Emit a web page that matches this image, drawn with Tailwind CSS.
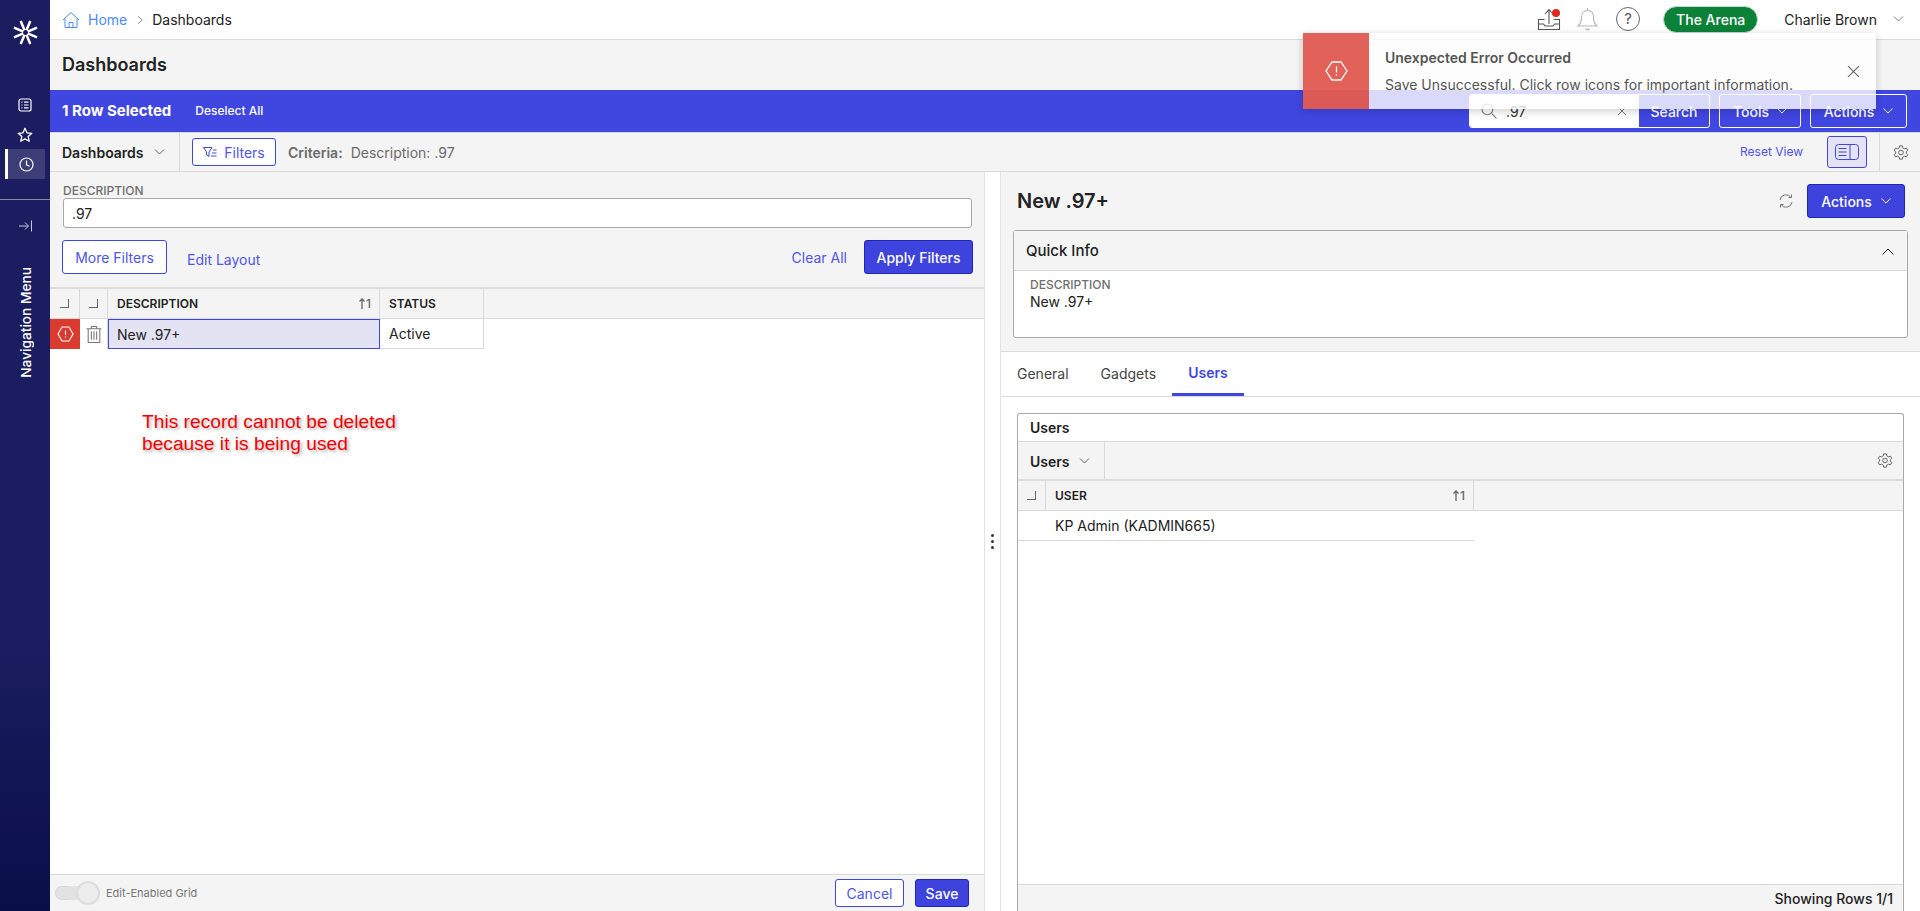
<!DOCTYPE html>
<html lang="en">
<head>
  <meta charset="UTF-8" />
  <title>Dashboards</title>
  <script src="https://cdn.jsdelivr.net/npm/@tailwindcss/browser@4"></script>
</head>
<body class="h-[911px] overflow-hidden bg-white font-['Inter',sans-serif] text-[14px] text-[#222]">
  <div class="relative flex h-[911px] w-[1920px]">

    <!-- Sidebar -->
    <aside class="flex w-[50px] shrink-0 flex-col items-center bg-gradient-to-b from-[#1b1d60] from-70% to-[#0a0e48] text-white">
      <svg class="mt-[20px] h-[25px] w-[25px]" viewBox="0 0 26 26" fill="none" stroke="white" stroke-width="2.600">
        <path d="M8 1l4 9.700M18 1l-4 9.700M1 8l9.700 4M25 8l-9.700 4M1 18l9.700-4M25 18l-9.700-4M8 25l4-9.700M18 25l-4-9.700"/>
      </svg>
      <svg class="mt-[53px] h-[14px] w-[14px]" viewBox="0 0 14 14" fill="none" stroke="white" stroke-width="1.200">
        <rect x="1" y="1" width="12" height="12" rx="2"/><path d="M3.500 4.200h1M3.500 7h1M3.500 9.800h1M6 4.200h4.500M6 7h4.500M6 9.800h4.500"/>
      </svg>
      <svg class="mt-[15px] h-[16px] w-[16px]" viewBox="0 0 16 16" fill="none" stroke="white" stroke-width="1.300" stroke-linejoin="round">
        <path d="M8 1.300l2 4.500 4.800.5-3.600 3.200 1 4.800L8 11.900l-4.200 2.400 1-4.800L1.200 6.300 6 5.800z"/>
      </svg>
      <div class="mt-[6px] flex h-[30px] w-[40px] items-center justify-center border-l-[3px] border-white bg-[#3d3e78]">
        <svg class="h-[15px] w-[15px]" viewBox="0 0 15 15" fill="none" stroke="white" stroke-width="1.200">
          <circle cx="7.500" cy="7.500" r="6.500"/><path d="M7.500 3.500v4.300l3 1.500"/>
        </svg>
      </div>
      <div class="mt-[20px] h-px w-full bg-[#85869f]"></div>
      <svg class="mt-[19px] ml-[1px] h-[14px] w-[14px]" viewBox="0 0 14 14" fill="none" stroke="#c9c9d8" stroke-width="1">
        <path d="M0 7h9M6 3.500L9.500 7 6 10.500M12.500 1.500v11"/>
      </svg>
      <span class="mt-[34px] ml-[1px] rotate-180 text-[13.7px] leading-[14px] font-medium whitespace-nowrap [writing-mode:vertical-rl]">Navigation Menu</span>
    </aside>

    <!-- Main -->
    <div class="flex min-w-0 flex-1 flex-col">
      <header class="flex h-[40px] shrink-0 items-center border-b border-[#d9d9d9] bg-white pr-[16px] pl-[12px]">
        <svg class="h-[18px] w-[18px]" viewBox="0 0 18 18" fill="none" stroke="#4d8bf0" stroke-width="1">
          <path d="M1 9L9 1.500 17 9M3 7.500V16.500h12V7.500M7 16.500v-5h4v5"/>
        </svg>
        <a class="ml-[8px] text-[#4a8cf5]">Home</a>
        <svg class="mr-[9px] ml-[10px] h-[10px] w-[6px]" viewBox="0 0 7 10" fill="none" stroke="#777" stroke-width="1"><path d="M1 .5L6 5 1 9.500"/></svg>
        <span>Dashboards</span>
        <div class="mb-[1px] ml-auto flex items-center">
          <div class="relative h-[24px] w-[24px]">
            <svg class="h-[24px] w-[24px]" viewBox="0 0 24 24" fill="none" stroke="#555" stroke-width="1.100">
              <path d="M12 17V3M8 7l4-4.500L16 7M7.500 12.500H1.500v10h21v-10h-6M1.500 17h5l1.500 2h8l1.500-2h5"/>
            </svg>
            <span class="absolute top-[2px] right-[1px] h-[8px] w-[8px] rounded-full bg-[#e0281f]"></span>
          </div>
          <svg class="ml-[15px] h-[24px] w-[23px]" viewBox="0 0 23 24" fill="none" stroke="#b5b5b5" stroke-width="1.100">
            <path d="M2 19c2.500-2 3.500-4.500 3.500-8.500C5.500 6 8 3.500 11.500 3.500s6 2.500 6 7c0 4 1 6.500 3.500 8.500zM11.500 1v2.500M9.500 21.500l2 1.500 2-1.500"/>
          </svg>
          <div class="ml-[17px] flex h-[24px] w-[24px] items-center justify-center rounded-full border border-[#666] text-[15px] text-[#555]">?</div>
          <div class="ml-[23px] flex h-[27px] w-[95px] items-center justify-center rounded-full border border-[#bfe0cb] bg-[#0c8239] font-medium text-white">The Arena</div>
          <span class="ml-[26px]">Charlie Brown</span>
          <svg class="ml-[16px] h-[6px] w-[11px]" viewBox="0 0 10 6" fill="none" stroke="#777" stroke-width="1"><path d="M.5.500L5 5 9.500.500"/></svg>
        </div>
      </header>

      <div class="flex h-[50px] shrink-0 items-center bg-[#f4f4f4] pb-[1px] pl-[12px] text-[18px] font-semibold">Dashboards</div>

      <div class="flex h-[43px] shrink-0 items-center border-b border-[#d9d9d9] bg-[#4046e0] pr-[13px] pl-[12px] text-white">
        <span class="text-[15px] font-bold">1 Row Selected</span>
        <span class="ml-[24px] text-[12px] font-medium">Deselect All</span>
        <div class="ml-auto flex items-center">
          <div class="flex h-[34px] w-[241px] overflow-hidden rounded-[3px] border border-white">
            <div class="flex w-[169px] items-center bg-white pl-[11px] text-[#333]">
              <svg class="h-[16px] w-[16px]" viewBox="0 0 15 15" fill="none" stroke="#777" stroke-width="1"><circle cx="6" cy="6" r="5"/><path d="M10 10l4.500 4.500"/></svg>
              <span class="ml-[9px]">.97</span>
              <svg class="mr-[12px] ml-auto h-[10px] w-[10px]" viewBox="0 0 10 10" stroke="#777" stroke-width="1"><path d="M1 1l8 8M9 1l-8 8"/></svg>
            </div>
            <div class="flex flex-1 items-center justify-center font-medium">Search</div>
          </div>
          <div class="ml-[9px] flex h-[34px] w-[82px] items-center justify-center gap-[8px] rounded-[3px] border border-white font-medium">Tools
            <svg class="h-[6px] w-[10px]" viewBox="0 0 10 6" fill="none" stroke="white" stroke-width="1"><path d="M.5.500L5 5 9.500.500"/></svg>
          </div>
          <div class="ml-[9px] flex h-[34px] w-[97px] items-center justify-center gap-[9px] rounded-[3px] border border-white font-medium">Actions
            <svg class="h-[6px] w-[10px]" viewBox="0 0 10 6" fill="none" stroke="white" stroke-width="1"><path d="M.5.500L5 5 9.500.500"/></svg>
          </div>
        </div>
      </div>

      <div class="flex h-[39px] shrink-0 items-center border-b border-[#d9d9d9] bg-[#f4f4f4] pr-[11px]">
        <div class="flex h-full w-[130px] items-center border-r border-[#d9d9d9] pl-[12px] font-semibold">Dashboards
          <svg class="ml-[10px] h-[6px] w-[11px]" viewBox="0 0 10 6" fill="none" stroke="#666" stroke-width="1"><path d="M.5.500L5 5 9.500.500"/></svg>
        </div>
        <div class="ml-[12px] flex h-[28px] w-[84px] items-center justify-center gap-[7px] rounded-[3px] border border-[#4046e0] bg-white text-[#4f55e6]">
          <svg class="h-[11px] w-[14px]" viewBox="0 0 14 11" fill="none" stroke="#4046e0" stroke-width="1"><path d="M.5.500h8.500L6 5v4.500L3.500 8V5zM10 3h3.500M9 6h4.500M8 9h5.500"/></svg>
          Filters
        </div>
        <span class="ml-[12px] font-semibold text-[#6b6b6b]">Criteria:</span>
        <span class="ml-[8px] text-[#6b6b6b]">Description: .97</span>
        <a class="ml-auto text-[12px] text-[#4f55e6]">Reset View</a>
        <div class="ml-[24px] flex h-[32px] w-[40px] items-center justify-center rounded-[3px] border border-[#4046e0] bg-[#e4e3f5]">
          <svg class="h-[16px] w-[24px]" viewBox="0 0 24 16" fill="none" stroke="#4046e0" stroke-width="1"><rect x=".5" y=".5" width="23" height="15" rx="3"/><path d="M15 .5v15M3.500 4.500h8M3.500 8h8M3.500 11.500h8"/></svg>
        </div>
        <div class="ml-[12px] h-full w-px bg-[#d9d9d9]"></div>
        <svg class="ml-[13px] h-[17px] w-[16px]" viewBox="0 0 24 24" fill="none" stroke="#666" stroke-width="1.500"><circle cx="12" cy="12" r="3.500"/><path d="M10 2h4l.6 3 2.700 1.500 2.900-1 2 3.500-2.300 2v2l2.300 2-2 3.500-2.900-1-2.700 1.500-.6 3h-4l-.6-3-2.700-1.500-2.900 1-2-3.500 2.300-2v-2l-2.300-2 2-3.500 2.900 1L9.400 5z"/></svg>
      </div>

      <div class="flex min-h-0 flex-1">
        <!-- Left pane -->
        <section class="flex w-[935px] shrink-0 flex-col border-r border-[#e3e3e3]">
          <div class="h-[117px] shrink-0 border-b-2 border-[#dcdcdc] bg-[#f4f4f4] pt-[13px] pr-[12px] pl-[13px]">
            <div class="h-[12px] text-[12px] leading-[12px] font-medium text-[#6f6f6f]">DESCRIPTION</div>
            <div class="mt-[1px] flex h-[30px] items-center rounded-[3px] border border-[#a9a9a9] bg-white pl-[8px] text-[14px]">.97</div>
            <div class="mt-[12px] flex items-center">
              <div class="ml-[-1px] flex h-[34px] w-[105px] items-center justify-center rounded-[3px] border border-[#4046e0] bg-white text-[#4f55e6]">More Filters</div>
              <a class="mt-[4px] ml-[20px] text-[#4f55e6]">Edit Layout</a>
              <a class="ml-auto text-[#4f55e6]">Clear All</a>
              <div class="mr-[-1px] ml-[17px] flex h-[34px] w-[109px] items-center justify-center rounded-[3px] border border-[#1f25b5] bg-[#3d43dc] font-medium text-white">Apply Filters</div>
            </div>
          </div>
          <div class="flex h-[30px] shrink-0 border-b border-[#d9d9d9] bg-[#f4f4f4]">
            <div class="flex w-[30px] items-center justify-center border-r border-[#d9d9d9]"><span class="h-[9px] w-[9px] border-r border-b border-[#666]"></span></div>
            <div class="flex w-[28px] items-center justify-center border-r border-[#d9d9d9]"><span class="h-[9px] w-[9px] border-r border-b border-[#666]"></span></div>
            <div class="flex w-[272px] items-center justify-between border-r border-[#d9d9d9] pr-[8px] pl-[9px] text-[12px] font-semibold">DESCRIPTION
              <span class="flex items-center gap-[1px] text-[12px] font-medium text-[#666]">
                <svg class="h-[11px] w-[6px]" viewBox="0 0 6 11" fill="none" stroke="#666" stroke-width="1.300"><path d="M3 11V1M.5 3.500L3 1l2.500 2.500"/></svg>1
              </span>
            </div>
            <div class="flex w-[104px] items-center border-r border-[#d9d9d9] pl-[9px] text-[12px] font-semibold">STATUS</div>
          </div>
          <div class="relative flex-1 bg-white">
            <div class="flex h-[30px]">
              <div class="flex w-[30px] items-center justify-center bg-[#db3a2e]">
                <svg class="h-[16px] w-[17px]" viewBox="0 0 17 16" fill="none" stroke="white" stroke-width="1.100"><path d="M5 1h7l4 7-4 7H5L1 8z"/><path d="M8.500 4.500v4.500M8.500 10.500v1.200"/></svg>
              </div>
              <div class="flex w-[28px] items-center justify-center border-r border-[#d9d9d9]">
                <svg class="h-[19px] w-[16px]" viewBox="0 0 15 18" fill="none" stroke="#777" stroke-width="1"><path d="M.5 3.500h14M5 3.500V1.500h5v2M2 3.500v13h11v-13M5 6v8M7.500 6v8M10 6v8"/></svg>
              </div>
              <div class="flex h-[30px] w-[272px] items-center border border-[#4046e0] bg-[#e4e3f4] pl-[8px]">New .97+</div>
              <div class="flex w-[104px] items-center border-r border-b border-[#d9d9d9] pl-[9px]">Active</div>
            </div>
            <!-- annotation added on the screenshot -->
            <p class="absolute top-[92px] left-[92px] font-['Liberation_Sans',sans-serif] text-[19.2px] leading-[22px] text-[#f00000] [text-shadow:2px_2px_3px_rgba(0,0,0,0.3)]">This record cannot be deleted<br>because it is being used</p>
          </div>
          <div class="flex h-[37px] shrink-0 items-center border-t border-[#d9d9d9] bg-[#f4f4f4] pr-[15px] pl-[5px]">
            <div class="flex items-center">
              <span class="h-[14px] w-[14px] rounded-l-full border border-r-0 border-[#d6d6d6] bg-[#e2e2e2]"></span>
              <span class="ml-[-1px] h-[14px] w-[10px] bg-[#e2e2e2]"></span>
              <span class="ml-[-2px] h-[24px] w-[24px] rounded-full border-2 border-[#dcdcdc] bg-[#ededed]"></span>
            </div>
            <span class="ml-[6px] text-[11px] text-[#777]">Edit-Enabled Grid</span>
            <div class="ml-auto flex h-[28px] w-[69px] items-center justify-center rounded-[3px] border border-[#4046e0] bg-white text-[#4f55e6]">Cancel</div>
            <div class="ml-[11px] flex h-[28px] w-[54px] items-center justify-center rounded-[3px] border border-[#1f25b5] bg-[#3d43dc] font-medium text-white">Save</div>
          </div>
        </section>

        <!-- Divider -->
        <div class="flex w-[15px] shrink-0 items-center justify-center bg-white">
          <div class="flex flex-col gap-[3px]">
            <span class="h-[3px] w-[3px] rounded-full bg-[#333]"></span>
            <span class="h-[3px] w-[3px] rounded-full bg-[#333]"></span>
            <span class="h-[3px] w-[3px] rounded-full bg-[#333]"></span>
          </div>
        </div>

        <!-- Right pane -->
        <section class="flex min-w-0 flex-1 flex-col border-l border-[#e3e3e3]">
          <div class="h-[180px] shrink-0 border-b border-[#d9d9d9] bg-[#f4f4f4] px-[12px]">
            <div class="flex h-[58px] items-center pr-[3px] pl-[4px]">
              <h1 class="text-[20px] font-semibold">New .97+</h1>
              <svg class="ml-auto h-[16px] w-[16px]" viewBox="0 0 16 16" fill="none" stroke="#777" stroke-width="1"><path d="M2 7a6 6 0 0 1 11-2.500M14 9a6 6 0 0 1-11 2.500M13.500 1.500v3h-3M2.500 14.500v-3h3"/></svg>
              <div class="ml-[13px] flex h-[34px] w-[98px] items-center justify-center gap-[9px] rounded-[3px] border border-[#1f25b5] bg-[#3d43dc] font-medium text-white">Actions
                <svg class="h-[6px] w-[10px]" viewBox="0 0 10 6" fill="none" stroke="white" stroke-width="1"><path d="M.5.500L5 5 9.500.500"/></svg>
              </div>
            </div>
            <div class="h-[108px] rounded-[3px] border border-[#a9a9a9] bg-white">
              <div class="flex h-[40px] items-center border-b border-[#d9d9d9] bg-[#f4f4f4] pt-[1px] pr-[13px] pl-[12px] text-[15px] font-medium">Quick Info
                <svg class="ml-auto h-[7px] w-[12px]" viewBox="0 0 12 7" fill="none" stroke="#222" stroke-width="1"><path d="M.5 6.500L6 1l5.500 5.500"/></svg>
              </div>
              <div class="pt-[8px] pl-[16px]">
                <div class="text-[12px] leading-[12px] font-medium text-[#6f6f6f]">DESCRIPTION</div>
                <div class="mt-[2px] text-[14px] leading-[17px]">New .97+</div>
              </div>
            </div>
          </div>
          <div class="flex h-[45px] shrink-0 items-start border-b border-[#d9d9d9] pl-[16px] text-[#444]">
            <span class="mt-[11px]">General</span>
            <span class="mt-[11px] ml-[32px]">Gadgets</span>
            <span class="ml-[16px] flex h-[44px] w-[72px] items-center justify-center border-b-[3px] border-[#4046e0] font-semibold text-[#4046e0]">Users</span>
          </div>
          <div class="flex min-h-0 flex-1 flex-col px-[16px] pt-[16px]">
            <div class="flex flex-1 flex-col rounded-t-[3px] border border-b-0 border-[#a9a9a9]">
              <div class="flex h-[28px] shrink-0 items-center border-b border-[#d9d9d9] pl-[12px] font-semibold">Users</div>
              <div class="flex h-[39px] shrink-0 items-center border-b-2 border-[#dcdcdc] bg-[#f4f4f4] pr-[10px]">
                <div class="flex h-full w-[87px] items-center border-r border-[#d9d9d9] pt-[1px] pl-[12px] font-semibold">Users
                  <svg class="ml-[9px] h-[6px] w-[11px]" viewBox="0 0 10 6" fill="none" stroke="#666" stroke-width="1"><path d="M.5.500L5 5 9.500.500"/></svg>
                </div>
                <svg class="ml-auto h-[17px] w-[16px]" viewBox="0 0 24 24" fill="none" stroke="#666" stroke-width="1.500"><circle cx="12" cy="12" r="3.500"/><path d="M10 2h4l.6 3 2.700 1.500 2.900-1 2 3.500-2.300 2v2l2.300 2-2 3.500-2.900-1-2.700 1.500-.6 3h-4l-.6-3-2.700-1.500-2.900 1-2-3.500 2.300-2v-2l-2.300-2 2-3.500 2.900 1L9.400 5z"/></svg>
              </div>
              <div class="flex h-[30px] shrink-0 border-b border-[#d9d9d9] bg-[#f4f4f4]">
                <div class="flex w-[28px] items-center justify-center border-r border-[#d9d9d9]"><span class="h-[9px] w-[9px] border-r border-b border-[#666]"></span></div>
                <div class="flex w-[428px] items-center justify-between border-r border-[#d9d9d9] pr-[8px] pl-[9px] text-[12px] font-semibold">USER
                  <span class="flex items-center gap-[1px] text-[12px] font-medium text-[#666]">
                    <svg class="h-[11px] w-[6px]" viewBox="0 0 6 11" fill="none" stroke="#666" stroke-width="1.300"><path d="M3 11V1M.5 3.500L3 1l2.500 2.500"/></svg>1
                  </span>
                </div>
              </div>
              <div class="flex h-[30px] w-[456px] shrink-0 items-center border-b border-[#d9d9d9] pl-[37px]">KP Admin (KADMIN665)</div>
              <div class="flex-1"></div>
              <div class="flex h-[27px] shrink-0 items-center justify-end border-t border-[#d9d9d9] bg-[#f4f4f4] pr-[10px] font-medium">Showing Rows 1/1</div>
            </div>
          </div>
        </section>
      </div>
    </div>

    <!-- Toast -->
    <div class="absolute top-[33px] left-[1303px] flex h-[76px] w-[573px] bg-white/80 shadow-[0_2px_8px_rgba(0,0,0,0.2)]">
      <div class="flex w-[66px] items-center justify-center bg-[#db3a2e]/80">
        <svg class="h-[20px] w-[23px]" viewBox="0 0 23 20" fill="none" stroke="white" stroke-width="1.300"><path d="M7 1h9l6 9-6 9H7l-6-9z"/><path d="M11.500 5.500v6M11.500 13v1.500"/></svg>
      </div>
      <div class="pt-[16px] pl-[16px] text-[#555]">
        <div class="leading-[17px] font-semibold">Unexpected Error Occurred</div>
        <div class="mt-[10px] leading-[17px]">Save Unsuccessful. Click row icons for important information.</div>
      </div>
      <svg class="absolute top-[32px] right-[16px] h-[13px] w-[13px]" viewBox="0 0 12 12" stroke="#666" stroke-width="1"><path d="M1 1l10 10M11 1L1 11"/></svg>
    </div>
  </div>
</body>
</html>
